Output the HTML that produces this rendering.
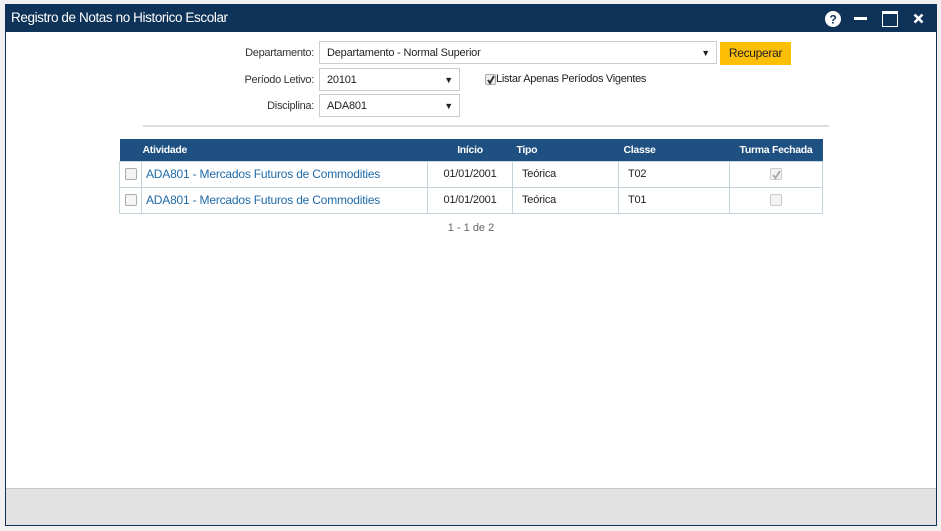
<!DOCTYPE html>
<html><head><meta charset="utf-8"><style>
*{box-sizing:border-box;margin:0;padding:0}
body{width:941px;height:531px;background:#f0f0f0;font-family:"Liberation Sans",sans-serif;position:relative;overflow:hidden;color:#222}
.win{position:absolute;left:5px;top:4px;width:932px;height:522px;border:1px solid #0f3358;background:#fff}
.tb{position:absolute;left:0;top:0;width:100%;height:27px;background:#0f3358;color:#fff;font-size:13.5px;line-height:26px;padding-left:5px;letter-spacing:-0.4px}
.foot{position:absolute;left:0;bottom:0;width:100%;height:37px;background:#e2e2e2;border-top:1px solid #c8c8c8}
.lbl{position:absolute;font-size:11px;color:#333;text-align:right;letter-spacing:-0.3px}
.sel{position:absolute;height:23px;border:1px solid #ccc;background:#fff;font-size:11px;line-height:23px;padding-left:7px;letter-spacing:-0.2px}
.sel .ar{position:absolute;right:6px;top:0;font-size:9px}
.btn{position:absolute;left:714px;top:37px;width:71px;height:23px;background:#fdbf06;font-size:12px;line-height:23px;text-align:center;letter-spacing:-0.3px}
.hr{position:absolute;left:137px;top:120px;width:686px;height:2px;background:#ddd}
table{position:absolute;left:113px;top:134px;width:704px;border-collapse:collapse;font-size:11px}
th{background:#1f5082;color:#fff;height:22px;text-align:left;font-weight:bold;font-size:10.5px;letter-spacing:-0.3px}
td{height:26px;border:1px solid #c5d4da;letter-spacing:-0.2px}
a{color:#1f6aa8;text-decoration:none;font-size:12px}
.cb{display:inline-block;width:12px;height:12px;border:1px solid #aaa;border-radius:2px;background:#f4f4f4;vertical-align:middle}
.pg{position:absolute;left:0;width:100%;top:217px;text-align:center;font-size:11px;color:#666}
</style></head><body>
<div class="win">
<div class="tb">Registro de Notas no Historico Escolar
<svg style="position:absolute;left:818px;top:5px" width="18" height="18"><circle cx="9" cy="9" r="8" fill="#fff"/><text x="9" y="13.5" text-anchor="middle" font-size="12" font-weight="bold" fill="#0f3358" font-family="Liberation Sans">?</text></svg>
<div style="position:absolute;left:848px;top:12px;width:13px;height:3px;background:#fff"></div>
<div style="position:absolute;left:876px;top:6px;width:16px;height:16px;border:1.5px solid #fff;border-top-width:3px"></div>
<svg style="position:absolute;left:907px;top:8px" width="11" height="11"><path d="M1.5 1.5L9.5 9.5M9.5 1.5L1.5 9.5" stroke="#fff" stroke-width="2.6"/></svg>
</div>
<div class="lbl" style="left:200px;top:42px;width:108px">Departamento:</div>
<div class="sel" style="left:313px;top:36px;width:398px">Departamento - Normal Superior<span class="ar">▼</span></div>
<div class="btn">Recuperar</div>
<div class="lbl" style="left:200px;top:69px;width:108px">Período Letivo:</div>
<div class="sel" style="left:313px;top:63px;width:141px">20101<span class="ar">▼</span></div>
<div style="position:absolute;left:479px;top:68px;font-size:11px;letter-spacing:-0.3px"><span class="cb" style="width:11px;height:11px;background:#eee;position:relative"><svg style="position:absolute;left:0;top:0" width="10" height="10"><path d="M2 5L4 8L8 1" stroke="#333" stroke-width="2" fill="none"/></svg></span>Listar Apenas Períodos Vigentes</div>
<div class="lbl" style="left:200px;top:95px;width:108px">Disciplina:</div>
<div class="sel" style="left:313px;top:89px;width:141px">ADA801<span class="ar">▼</span></div>
<div class="hr"></div>
<table>
<tr><th style="width:22px"></th><th style="width:286px;padding-left:1px">Atividade</th><th style="width:85px;text-align:center">Início</th><th style="width:106px;padding-left:4px">Tipo</th><th style="width:111px;padding-left:5px">Classe</th><th style="text-align:center">Turma Fechada</th></tr>
<tr><td style="text-align:center"><span class="cb"></span></td><td style="padding-left:4px"><a>ADA801 - Mercados Futuros de Commodities</a></td><td style="text-align:center">01/01/2001</td><td style="padding-left:9px">Teórica</td><td style="padding-left:9px">T02</td><td style="text-align:center"><span class="cb" style="position:relative;border-color:#ccc"><svg style="position:absolute;left:0;top:0" width="11" height="11"><path d="M2 6L4.5 9L9 2" stroke="#aaa" stroke-width="2" fill="none"/></svg></span></td></tr>
<tr><td style="text-align:center"><span class="cb"></span></td><td style="padding-left:4px"><a>ADA801 - Mercados Futuros de Commodities</a></td><td style="text-align:center">01/01/2001</td><td style="padding-left:9px">Teórica</td><td style="padding-left:9px">T01</td><td style="text-align:center"><span class="cb" style="border-color:#ccc"></span></td></tr>
</table>
<div class="pg">1 - 1 de 2</div>
<div class="foot"></div>
</div>
</body></html>
